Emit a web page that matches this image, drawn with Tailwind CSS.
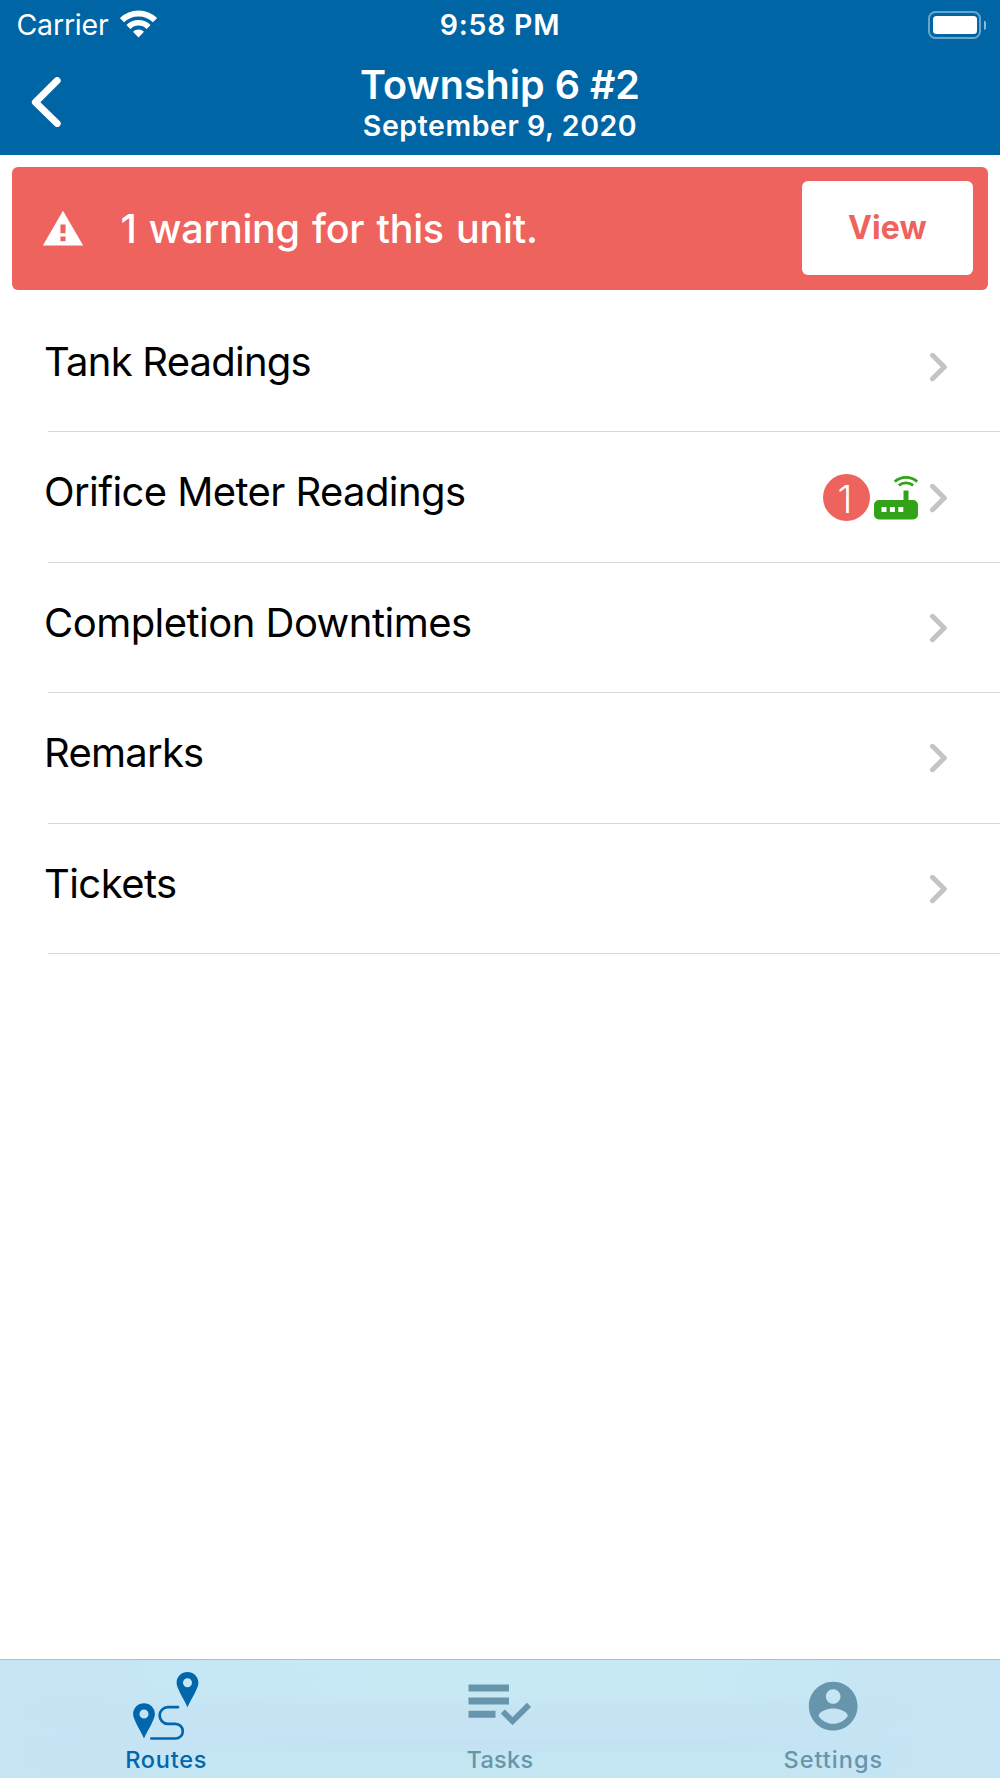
<!DOCTYPE html>
<html lang="en">
<head>
    <meta charset="UTF-8">
    <meta name="viewport" content="width=device-width, initial-scale=1.0">
    <title>Township 6 #2</title>
    <script src="https://cdn.jsdelivr.net/npm/@tailwindcss/browser@4"></script>
</head>
<body class="bg-white text-black font-['Inter',sans-serif]">
    <div class="flex flex-col h-[1778px] w-[1000px] overflow-hidden">

        <!-- Header -->
        <header class="bg-[#0065a4] text-white h-[155px] shrink-0">
            <div class="grid grid-cols-[1fr_120px_1fr] items-center h-[51px] pl-[16.5px] pr-[14px]">
                <div class="flex items-center gap-[11px] text-[28.5px] leading-none tracking-[-0.2px]">
                    <span>Carrier</span>
                    <svg class="w-[37px] h-[28px] -mt-[3px]" viewBox="0 0 37 28" fill="none" stroke="#fff">
                        <path d="M2 10.2a23.5 23.5 0 0 1 33 0" stroke-width="6"/>
                        <path d="M8.4 17a14.3 14.3 0 0 1 20.2 0" stroke-width="5.6"/>
                        <path d="M13 21.8a7.800 7.800 0 0 1 11 0L18.500 27.500z" fill="#fff" stroke="none"/>
                    </svg>
                </div>
                <div class="-ml-[2.500px] text-center whitespace-nowrap text-[28.5px] leading-none font-semibold tracking-[0.74px]">9:58 PM</div>
                <svg class="justify-self-end w-[59px] h-[28px] -mt-[2px]" viewBox="0 0 59 28">
                    <rect x="2" y="1" width="51" height="26" rx="6.500" fill="none" stroke="#fff" stroke-opacity=".42" stroke-width="2"/>
                    <rect x="6" y="5" width="44" height="18" rx="3.500" fill="#fff"/>
                    <path d="M57 9.500c4 1.600 4 8 0 9.500z" fill="#fff" fill-opacity=".55"/>
                </svg>
            </div>
            <div class="grid grid-cols-[100px_1fr_100px] pt-[12px]">
                <button class="flex pl-[30.5px] pt-[14px]">
                    <svg class="w-[30px] h-[50px]" viewBox="0 0 30 50" fill="none" stroke="#fff" stroke-width="7" stroke-linecap="round" stroke-linejoin="round">
                        <path d="M26.200 3.600L4.400 25.200l21.800 21.400"/>
                    </svg>
                </button>
                <div class="text-center font-semibold">
                    <h1 class="text-[39.5px] leading-[44px]">Township 6 #2</h1>
                    <p class="text-[28.5px] leading-[38px] tracking-[0.56px]">September 9, 2020</p>
                </div>
            </div>
        </header>

        <!-- Warning banner -->
        <section class="flex items-center shrink-0 h-[123px] mt-3 ml-3 mr-3 pl-[29px] pr-[15px] rounded-[6px] bg-[#ee635e] text-white">
            <svg class="w-[44px] h-[44px] mt-px" viewBox="0 0 24 24" fill="currentColor">
                <path d="M1 21h22L12 2 1 21zm12.400-2.300h-2.800v-2.600h2.800v2.600zm0-4.400h-2.800V9.500h2.800v4.800z"/>
            </svg>
            <p class="ml-[35.500px] pt-[2px] text-[39.5px] font-medium tracking-[-0.28px] [word-spacing:2px]">1 warning for this unit.</p>
            <button class="ml-auto mb-px w-[171px] h-[94px] rounded-[6px] bg-white text-[#ee635e] text-[32px] font-bold tracking-[0.1px]">View</button>
        </section>

        <!-- Menu -->
        <ul class="flex-1 pt-[12px] text-[40px] leading-[48px]">
            <li class="h-[130.4px] pl-[48px]">
                <a class="flex items-center h-full border-b border-[#d8d9d8] pt-px pr-[52px]">
                    <span class="-ml-[4px] pb-[11px] tracking-[-0.78px]">Tank Readings</span>
                    <svg class="ml-auto w-[19px] h-[30px]" viewBox="0 0 19 30" fill="none" stroke="#c4c4c6" stroke-width="5" stroke-linecap="round" stroke-linejoin="round"><path d="M3.500 3.300L15.300 15 3.500 26.700"/></svg>
                </a>
            </li>
            <li class="h-[130.4px] pl-[48px]">
                <a class="flex items-center h-full border-b border-[#d8d9d8] pt-px pr-[52px]">
                    <span class="-ml-[4px] pb-[11px] tracking-[-0.59px]">Orifice Meter Readings</span>
                    <span class="ml-auto flex items-center justify-center size-[47px] rounded-full bg-[#ee635e] text-white text-[38px] font-light pt-[2px] pr-[2px]">1</span>
                    <svg class="ml-[4px] w-[45px] h-[46px]" viewBox="0 0 45 46" fill="#32a318">
                        <path d="M5 25H29.500v-9.500h5V25H39a5 5 0 0 1 5 5v9.500a5 5 0 0 1-5 5H5a5 5 0 0 1-5-5V30a5 5 0 0 1 5-5zM7.500 32v5h5v-5zm8.400 0v5h5v-5zm8.400 0v5h5v-5z" fill-rule="evenodd"/>
                        <path d="M20.800 6.600a17 17 0 0 1 22.400 0M24.800 10.400a11.300 11.300 0 0 1 14.400 0" fill="none" stroke="#32a318" stroke-width="2.800"/>
                    </svg>
                    <svg class="ml-[10.500px] w-[19px] h-[30px]" viewBox="0 0 19 30" fill="none" stroke="#c4c4c6" stroke-width="5" stroke-linecap="round" stroke-linejoin="round"><path d="M3.500 3.300L15.300 15 3.500 26.700"/></svg>
                </a>
            </li>
            <li class="h-[130.4px] pl-[48px]">
                <a class="flex items-center h-full border-b border-[#d8d9d8] pt-[2px] pr-[52px]">
                    <span class="-ml-[4px] pb-[11px] tracking-[-0.53px]">Completion Downtimes</span>
                    <svg class="ml-auto w-[19px] h-[30px]" viewBox="0 0 19 30" fill="none" stroke="#c4c4c6" stroke-width="5" stroke-linecap="round" stroke-linejoin="round"><path d="M3.500 3.300L15.300 15 3.500 26.700"/></svg>
                </a>
            </li>
            <li class="h-[130.4px] pl-[48px]">
                <a class="flex items-center h-full border-b border-[#d8d9d8] pt-px pr-[52px]">
                    <span class="-ml-[4px] pb-[11px] tracking-[-0.75px]">Remarks</span>
                    <svg class="ml-auto w-[19px] h-[30px]" viewBox="0 0 19 30" fill="none" stroke="#c4c4c6" stroke-width="5" stroke-linecap="round" stroke-linejoin="round"><path d="M3.500 3.300L15.300 15 3.500 26.700"/></svg>
                </a>
            </li>
            <li class="h-[130.4px] pl-[48px]">
                <a class="flex items-center h-full border-b border-[#d8d9d8] pt-[2px] pr-[52px]">
                    <span class="-ml-[4px] pb-[11px] tracking-[-0.57px]">Tickets</span>
                    <svg class="ml-auto w-[19px] h-[30px]" viewBox="0 0 19 30" fill="none" stroke="#c4c4c6" stroke-width="5" stroke-linecap="round" stroke-linejoin="round"><path d="M3.500 3.300L15.300 15 3.500 26.700"/></svg>
                </a>
            </li>
        </ul>

        <!-- Tab bar -->
        <nav class="grid grid-cols-3 shrink-0 h-[119px] border-t border-[#a9bfca] bg-[linear-gradient(90deg,#c5e4f4_0%,#c5e4f400_38%,#c5e4f400_70%,#c5e4f4_92%),linear-gradient(#c6eaf5_0%,#c7e9f4_28%,#c5e2f2_48%,#c6e5f4_58%,#c3e1f2_70%,#c4e7f2_84%,#c6e6f4_100%)] text-[#6795ab] text-[23.5px] leading-[30px] font-medium">
            <a class="flex flex-col items-center text-[#0067ac]">
                <svg class="mt-[10.500px] -ml-[2px] w-[68px] h-[70px]" viewBox="0 0 68 70" fill="currentColor">
                    <path fill-rule="evenodd" d="M55.500 1c6 0 10.900 4.700 10.900 10.800 0 5.200-6.400 15-10.900 24.400-4.500-9.400-10.900-19.200-10.900-24.400C44.600 5.700 49.500 1 55.500 1zm0 6.200a4.500 4.500 0 1 0 0 9 4.500 4.500 0 0 0 0-9z"/>
                    <path fill-rule="evenodd" d="M12 32.300c6 0 10.900 4.700 10.900 10.800 0 5.200-6.400 15-10.900 24.400C7.500 58.100 1.100 48.300 1.100 43.100c0-6.100 4.900-10.800 10.900-10.800zm0 6.200a4.500 4.500 0 1 0 0 9 4.500 4.500 0 0 0 0-9z"/>
                    <path d="M46 36.200H36a8.200 8.200 0 0 0 0 16.700h7.500a7.300 7.300 0 0 1 0 14.600H19.300" fill="none" stroke="currentColor" stroke-width="2.700" stroke-linecap="round"/>
                </svg>
                <span class="mt-[4.500px] -ml-px tracking-[0.74px]">Routes</span>
            </a>
            <a class="flex flex-col items-center">
                <svg class="mt-[10px] w-[66px] h-[70px]" viewBox="0 0 66 70" fill="currentColor">
                    <path d="M1.500 14.500h40.500v7H1.500zM1.500 27.500h40.500v7H1.500zM1.500 40.700h27v7H1.500z"/>
                    <path d="M35.800 41.500l9.700 9.700 16.500-16.300" fill="none" stroke="currentColor" stroke-width="5.800"/>
                </svg>
                <span class="mt-[5px] tracking-[0.31px]">Tasks</span>
            </a>
            <a class="flex flex-col items-center">
                <svg class="mt-[16.500px] mb-[6px] w-[58.400px] h-[58.400px]" viewBox="0 0 24 24" fill="currentColor">
                    <path d="M12 2C6.480 2 2 6.480 2 12s4.480 10 10 10 10-4.480 10-10S17.520 2 12 2zm0 3c1.660 0 3 1.340 3 3s-1.340 3-3 3-3-1.340-3-3 1.340-3 3-3zm0 14.200c-2.500 0-4.710-1.280-6-3.220.03-1.990 4-3.080 6-3.080 1.990 0 5.970 1.090 6 3.080-1.290 1.940-3.500 3.220-6 3.220z"/>
                </svg>
                <span class="mt-[4.100px] tracking-[1px]">Settings</span>
            </a>
        </nav>
    </div>
</body>
</html>
